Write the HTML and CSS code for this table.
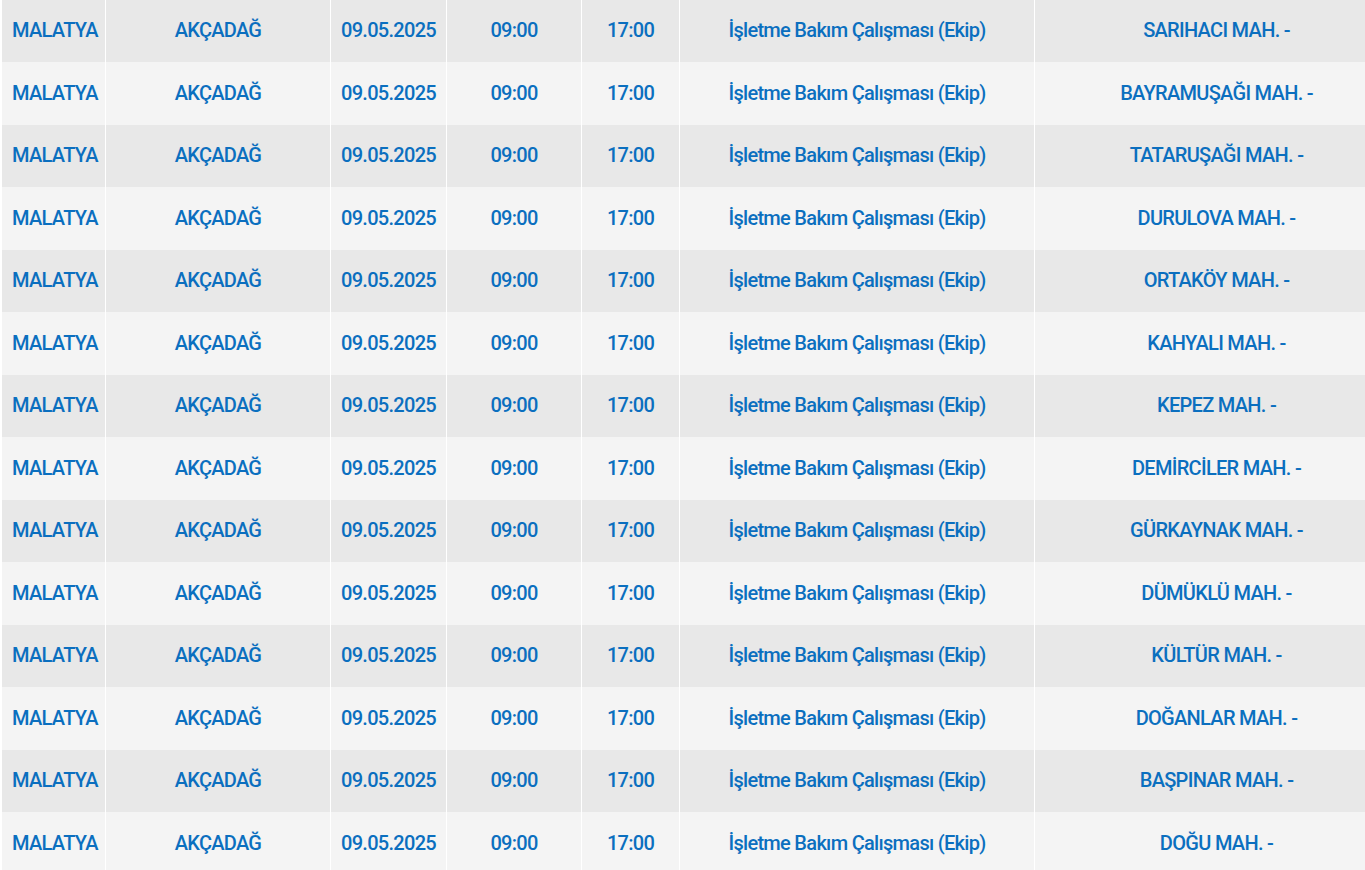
FILE: index.html
```html
<!DOCTYPE html>
<html lang="tr">
<head>
<meta charset="utf-8">
<title>Planlı Kesintiler</title>
<link rel="stylesheet" href="styles.css">
</head>
<body>
<div class="wrap">
<table class="outages">
<colgroup>
<col class="c-il"><col class="c-ilce"><col class="c-date"><col class="c-start"><col class="c-end"><col class="c-reason"><col class="c-place">
</colgroup>
<tbody>
<tr><td class="left">MALATYA</td><td>AKÇADAĞ</td><td>09.05.2025</td><td>09:00</td><td>17:00</td><td>İşletme Bakım Çalışması (Ekip)</td><td>SARIHACI MAH. -</td></tr>
<tr><td class="left">MALATYA</td><td>AKÇADAĞ</td><td>09.05.2025</td><td>09:00</td><td>17:00</td><td>İşletme Bakım Çalışması (Ekip)</td><td>BAYRAMUŞAĞI MAH. -</td></tr>
<tr><td class="left">MALATYA</td><td>AKÇADAĞ</td><td>09.05.2025</td><td>09:00</td><td>17:00</td><td>İşletme Bakım Çalışması (Ekip)</td><td>TATARUŞAĞI MAH. -</td></tr>
<tr><td class="left">MALATYA</td><td>AKÇADAĞ</td><td>09.05.2025</td><td>09:00</td><td>17:00</td><td>İşletme Bakım Çalışması (Ekip)</td><td>DURULOVA MAH. -</td></tr>
<tr><td class="left">MALATYA</td><td>AKÇADAĞ</td><td>09.05.2025</td><td>09:00</td><td>17:00</td><td>İşletme Bakım Çalışması (Ekip)</td><td>ORTAKÖY MAH. -</td></tr>
<tr><td class="left">MALATYA</td><td>AKÇADAĞ</td><td>09.05.2025</td><td>09:00</td><td>17:00</td><td>İşletme Bakım Çalışması (Ekip)</td><td>KAHYALI MAH. -</td></tr>
<tr><td class="left">MALATYA</td><td>AKÇADAĞ</td><td>09.05.2025</td><td>09:00</td><td>17:00</td><td>İşletme Bakım Çalışması (Ekip)</td><td>KEPEZ MAH. -</td></tr>
<tr><td class="left">MALATYA</td><td>AKÇADAĞ</td><td>09.05.2025</td><td>09:00</td><td>17:00</td><td>İşletme Bakım Çalışması (Ekip)</td><td>DEMİRCİLER MAH. -</td></tr>
<tr><td class="left">MALATYA</td><td>AKÇADAĞ</td><td>09.05.2025</td><td>09:00</td><td>17:00</td><td>İşletme Bakım Çalışması (Ekip)</td><td>GÜRKAYNAK MAH. -</td></tr>
<tr><td class="left">MALATYA</td><td>AKÇADAĞ</td><td>09.05.2025</td><td>09:00</td><td>17:00</td><td>İşletme Bakım Çalışması (Ekip)</td><td>DÜMÜKLÜ MAH. -</td></tr>
<tr><td class="left">MALATYA</td><td>AKÇADAĞ</td><td>09.05.2025</td><td>09:00</td><td>17:00</td><td>İşletme Bakım Çalışması (Ekip)</td><td>KÜLTÜR MAH. -</td></tr>
<tr><td class="left">MALATYA</td><td>AKÇADAĞ</td><td>09.05.2025</td><td>09:00</td><td>17:00</td><td>İşletme Bakım Çalışması (Ekip)</td><td>DOĞANLAR MAH. -</td></tr>
<tr><td class="left">MALATYA</td><td>AKÇADAĞ</td><td>09.05.2025</td><td>09:00</td><td>17:00</td><td>İşletme Bakım Çalışması (Ekip)</td><td>BAŞPINAR MAH. -</td></tr>
<tr><td class="left">MALATYA</td><td>AKÇADAĞ</td><td>09.05.2025</td><td>09:00</td><td>17:00</td><td>İşletme Bakım Çalışması (Ekip)</td><td>DOĞU MAH. -</td></tr>
</tbody>
</table>
</div>
</body>
</html>
```
FILE: styles.css
```css
html, body {
  margin: 0;
  padding: 0;
  background: #ffffff;
}
body {
  font-family: Roboto, "Liberation Sans", sans-serif;
  overflow: hidden;
}
.wrap {
  padding-left: 2px;
  width: 1363px;
  overflow: hidden;
}
.outages {
  table-layout: fixed;
  border-collapse: separate;
  border-spacing: 0;
  width: 1396px;
}
.c-il { width: 104px; }
.c-ilce { width: 225px; }
.c-date { width: 116px; }
.c-start { width: 135px; }
.c-end { width: 98px; }
.c-reason { width: 355px; }
.c-place { width: 363px; }
.outages td {
  padding: 0 0 2px;
  border-right: 1px solid #ffffff;
  text-align: center;
  vertical-align: middle;
  font-size: 20px;
  letter-spacing: -0.7px;
  font-weight: 500;
  color: #0b6fbf;
  white-space: nowrap;
}
.outages td:last-child {
  border-right: 0;
}
.outages td.left {
  text-align: left;
  padding-left: 10px;
}
.outages tr:nth-child(odd) { background: #e8e8e8; height: 62px; }
.outages tr:nth-child(even) { background: #f4f4f4; height: 63px; }
```
